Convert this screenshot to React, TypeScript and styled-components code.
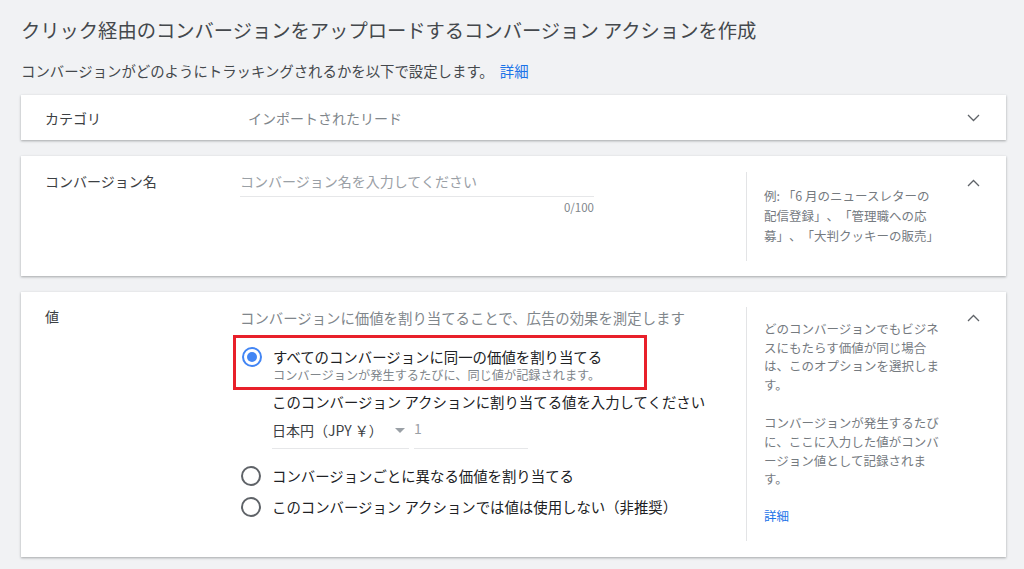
import React from 'react';
import styled, { createGlobalStyle } from 'styled-components';

const GlobalStyle = createGlobalStyle`
  html, body {
    margin: 0;
    padding: 0;
    background: #f1f2f4;
  }
  body {
    font-family: "Noto Sans CJK JP", "Noto Sans", sans-serif;
    color: #3c4043;
    text-spacing-trim: space-all;
  }
`;

const Page = styled.div`
  padding: 18px 18px 12px 21px;
`;

const Title = styled.h1`
  margin: 0;
  font-size: 19.3px;
  font-weight: 400;
  line-height: 24px;
  color: #44484c;
`;

const Lead = styled.p`
  margin: 19px 0 14px;
  font-size: 14.4px;
  line-height: 20px;
  color: #44484c;
`;

const Link = styled.a<{ $gap?: number }>`
  color: #1a73e8;
  text-decoration: none;
  margin-left: ${p => p.$gap ?? 0}px;
`;

const Stack = styled.div`
  display: flex;
  flex-direction: column;
  gap: 16px;
`;

const Card = styled.section<{ $collapsed?: boolean }>`
  display: flex;
  align-items: ${p => (p.$collapsed ? 'center' : 'flex-start')};
  height: ${p => (p.$collapsed ? '45px' : 'auto')};
  background: #fff;
  box-shadow: 0 1px 2px rgba(60, 64, 67, 0.3), 0 1px 3px rgba(60, 64, 67, 0.15);
`;

const Label = styled.div<{ $top?: number }>`
  width: 219px;
  flex: none;
  box-sizing: border-box;
  padding: ${p => p.$top ?? 0}px 0 0 24px;
  font-size: 14px;
  line-height: 20px;
  color: #3c4043;
`;

const Main = styled.div<{ $top?: number; $indent?: number }>`
  width: 506px;
  flex: none;
  box-sizing: border-box;
  padding: ${p => p.$top ?? 0}px 0 0 ${p => p.$indent ?? 0}px;
`;

const Value = styled.div`
  font-size: 14px;
  line-height: 20px;
  color: #80868b;
`;

const Aside = styled.aside<{ $top: number; $bottom: number; $line: number }>`
  width: 201px;
  flex: none;
  box-sizing: border-box;
  align-self: stretch;
  margin: ${p => p.$top}px 0 ${p => p.$bottom}px;
  padding: ${p => p.$top - 2}px 0 ${p => p.$bottom}px 17px;
  border-left: 1px solid #e3e4e6;
  font-size: 12.5px;
  line-height: ${p => p.$line}px;
  color: #757a7f;
  white-space: nowrap;
`;

const Para = styled.p<{ $gap?: number }>`
  margin: 0 0 ${p => p.$gap ?? 0}px;
`;

const Spacer = styled.div`
  flex: 1;
`;

const ChevronCell = styled.div<{ $top?: number }>`
  width: 59px;
  flex: none;
  box-sizing: border-box;
  display: flex;
  justify-content: center;
  padding: ${p => p.$top ?? 0}px 7px 0 0;
`;

const ChevronBox = styled.span`
  width: 24px;
  height: 24px;
  display: flex;
  align-items: center;
  justify-content: center;
`;

const TextInput = styled.div`
  width: 354px;
`;

const InputLine = styled.div`
  height: 26px;
  box-sizing: border-box;
  border-bottom: 1px solid #e6e7e9;
  font-size: 14px;
  line-height: 20px;
  color: #9aa0a6;
`;

const Counter = styled.div`
  margin-top: 4px;
  text-align: right;
  font-size: 11.5px;
  line-height: 12px;
  color: #80868b;
`;

const Description = styled.div`
  font-size: 14.4px;
  line-height: 20px;
  color: #80868b;
`;

const Highlight = styled.div`
  width: 414px;
  box-sizing: border-box;
  margin: 7px 0 0 -7px;
  padding: 9px 0 4px 5px;
  border: 3px solid #e8202a;
`;

const Option = styled.div<{ $gap?: number }>`
  display: flex;
  align-items: flex-start;
  gap: 11px;
  margin-top: ${p => p.$gap ?? 0}px;
  padding-left: 1px;
`;

const Radio = styled.span<{ $checked?: boolean }>`
  width: 20px;
  height: 20px;
  flex: none;
  box-sizing: border-box;
  border-radius: 50%;
  border: 2px solid ${p => (p.$checked ? '#4285f4' : '#5f6368')};
  display: flex;
  align-items: center;
  justify-content: center;

  &::after {
    content: '';
    display: ${p => (p.$checked ? 'block' : 'none')};
    width: 10px;
    height: 10px;
    border-radius: 50%;
    background: #4285f4;
  }
`;

const OptionText = styled.div`
  font-size: 14.4px;
  line-height: 20px;
  color: #202124;
`;

const OptionHint = styled.div`
  font-size: 12.2px;
  line-height: 16px;
  color: #80868b;
`;

const Indented = styled.div`
  padding-left: 32px;
`;

const Prompt = styled.div`
  margin-top: 2px;
  font-size: 14.4px;
  line-height: 20px;
  color: #202124;
`;

const AmountRow = styled.div`
  display: flex;
  align-items: flex-end;
  gap: 5px;
  margin-top: 6px;
`;

const Select = styled.div`
  width: 137px;
  box-sizing: border-box;
  display: flex;
  align-items: center;
  justify-content: space-between;
  padding: 0 4px 8px 0;
  border-bottom: 1px solid #e6e7e9;
  font-size: 14px;
  line-height: 20px;
  color: #3c4043;
`;

const Caret = styled.span`
  width: 0;
  height: 0;
  border-left: 5px solid transparent;
  border-right: 5px solid transparent;
  border-top: 5px solid #9aa0a6;
`;

const Amount = styled.div`
  width: 114px;
  padding-bottom: 10px;
  border-bottom: 1px solid #e6e7e9;
  font-size: 14px;
  line-height: 20px;
  color: #9aa0a6;
`;

const Chevron = ({ up }: { up?: boolean }) => (
  <ChevronBox>
    <svg width="13" height="8" viewBox="0 0 13 8">
      <polyline
        points={up ? '1,7 6.5,1.5 12,7' : '1,1 6.5,6.5 12,1'}
        fill="none"
        stroke="#5f6368"
        strokeWidth="1.3"
      />
    </svg>
  </ChevronBox>
);

export default function App() {
  return (
    <>
      <GlobalStyle />
      <Page>
        <Title>クリック経由のコンバージョンをアップロードするコンバージョン アクションを作成</Title>
        <Lead>
          コンバージョンがどのようにトラッキングされるかを以下で設定します。
          <Link href="#" $gap={6}>詳細</Link>
        </Lead>

        <Stack>
          <Card $collapsed>
            <Label>カテゴリ</Label>
            <Main $indent={8}>
              <Value>インポートされたリード</Value>
            </Main>
            <Spacer />
            <ChevronCell>
              <Chevron />
            </ChevronCell>
          </Card>

          <Card>
            <Label $top={15}>コンバージョン名</Label>
            <Main $top={15}>
              <TextInput>
                <InputLine>コンバージョン名を入力してください</InputLine>
                <Counter>0/100</Counter>
              </TextInput>
            </Main>
            <Aside $top={16} $bottom={15} $line={20}>
              例: 「6 月のニュースレターの<br />
              配信登録」、「管理職への応<br />
              募」、「大判クッキーの販売」
            </Aside>
            <ChevronCell $top={15}>
              <Chevron up />
            </ChevronCell>
          </Card>

          <Card>
            <Label $top={14}>値</Label>
            <Main $top={16}>
              <Description>コンバージョンに価値を割り当てることで、広告の効果を測定します</Description>
              <Highlight>
                <Option>
                  <Radio $checked />
                  <div>
                    <OptionText>すべてのコンバージョンに同一の価値を割り当てる</OptionText>
                    <OptionHint>コンバージョンが発生するたびに、同じ値が記録されます。</OptionHint>
                  </div>
                </Option>
              </Highlight>
              <Indented>
                <Prompt>このコンバージョン アクションに割り当てる値を入力してください</Prompt>
                <AmountRow>
                  <Select>
                    <span>日本円（JPY ￥）</span>
                    <Caret />
                  </Select>
                  <Amount>1</Amount>
                </AmountRow>
              </Indented>
              <Option $gap={17}>
                <Radio />
                <OptionText>コンバージョンごとに異なる価値を割り当てる</OptionText>
              </Option>
              <Option $gap={11}>
                <Radio />
                <OptionText>このコンバージョン アクションでは値は使用しない（非推奨）</OptionText>
              </Option>
            </Main>
            <Aside $top={15} $bottom={16} $line={18.6}>
              <Para $gap={20}>
                どのコンバージョンでもビジネ<br />
                スにもたらす価値が同じ場合<br />
                は、このオプションを選択しま<br />
                す。
              </Para>
              <Para $gap={18}>
                コンバージョンが発生するたび<br />
                に、ここに入力した値がコンバ<br />
                ージョン値として記録されま<br />
                す。
              </Para>
              <Link href="#">詳細</Link>
            </Aside>
            <ChevronCell $top={14}>
              <Chevron up />
            </ChevronCell>
          </Card>
        </Stack>
      </Page>
    </>
  );
}
